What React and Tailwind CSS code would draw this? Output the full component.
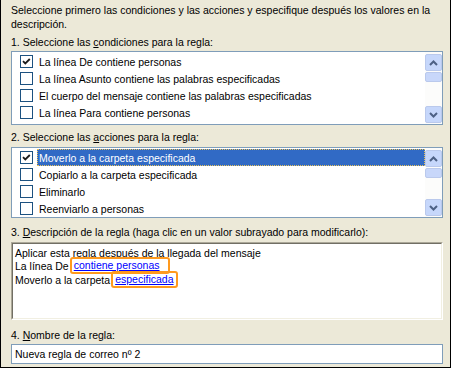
import React from "react";

const font = { fontFamily: '"Liberation Sans", Arial, sans-serif' };

const CheckBox = ({ checked }) => (
  <div className="w-[13px] h-[13px] border border-[#1C5180] bg-white flex items-center justify-center shrink-0">
    {checked && (
      <svg width="9" height="9" viewBox="0 0 9 9">
        <path d="M1 4.2 L3.3 6.5 L7.8 2" stroke="#1C1C1C" strokeWidth="1.8" fill="none" />
      </svg>
    )}
  </div>
);

const ScrollBar = () => (
  <div className="w-[17px] h-full flex flex-col bg-[#FCFCFB] pt-[2px] pb-[1px]">
    <div className="w-[17px] h-[17px] rounded-[2px] border border-[#BAC9EC] bg-[#C6D7FB] flex items-center justify-center">
      <svg width="9" height="6" viewBox="0 0 9 6">
        <path d="M1 5 L4.5 1.5 L8 5" stroke="#4D6185" strokeWidth="2" fill="none" />
      </svg>
    </div>
    <div className="w-[17px] h-[10px] mt-[1px] rounded-[2px] border border-[#BAC9EC] bg-[#C8D7FA]" />
    <div className="flex-1" />
    <div className="w-[17px] h-[17px] rounded-[2px] border border-[#BAC9EC] bg-[#C6D7FB] flex items-center justify-center">
      <svg width="9" height="6" viewBox="0 0 9 6">
        <path d="M1 1 L4.5 4.5 L8 1" stroke="#4D6185" strokeWidth="2" fill="none" />
      </svg>
    </div>
  </div>
);

const ListBox = ({ items, height }) => (
  <div className={`mx-[10px] w-[432px] ${height} border border-[#7F9DB9] bg-white flex`}>
    <div className="flex-1 flex flex-col pt-[1px]">
      {items.map((item, index) => (
        <div key={index} className="h-[17px] flex items-center pl-[8px]">
          <CheckBox checked={item.checked} />
          <div className="ml-[4px] flex-1 h-[17px] flex items-center">
            <span
              className={`h-[17px] flex items-center px-[2px] flex-1 ${
                item.selected
                  ? "bg-[#316AC5] text-white outline outline-1 outline-dotted outline-[#E8C25A] -outline-offset-1"
                  : "text-black"
              }`}
            >
              {item.label}
            </span>
          </div>
        </div>
      ))}
    </div>
    <ScrollBar />
  </div>
);

export default function App() {
  return (
    <div
      className="w-[451px] h-[368px] bg-[#ECE9D8] border-l border-r border-b border-black text-[10.5px] text-black leading-[14px]"
      style={font}
    >
      <p className="pl-[10px] pt-[3px] pr-[10px] leading-[14px]">
        Seleccione primero las condiciones y las acciones y especifique después los valores en la descripción.
      </p>
      <p className="pl-[10px] mt-[4px] mb-[2px] leading-[14px]">
        1. Seleccione las <u>c</u>ondiciones para la regla:
      </p>
      <ListBox
        height="h-[74px]"
        items={[
          { label: "La línea De contiene personas", checked: true },
          { label: "La línea Asunto contiene las palabras especificadas" },
          { label: "El cuerpo del mensaje contiene las palabras especificadas" },
          { label: "La línea Para contiene personas" },
        ]}
      />
      <p className="pl-[10px] mt-[5px] mb-[3px] leading-[14px]">
        2. Seleccione las <u>a</u>cciones para la regla:
      </p>
      <ListBox
        height="h-[71px]"
        items={[
          { label: "Moverlo a la carpeta especificada", checked: true, selected: true },
          { label: "Copiarlo a la carpeta especificada" },
          { label: "Eliminarlo" },
          { label: "Reenviarlo a personas" },
        ]}
      />
      <p className="pl-[10px] mt-[7px] mb-[3px] leading-[14px]">
        3. <u>D</u>escripción de la regla (haga clic en un valor subrayado para modificarlo):
      </p>
      <div className="mx-[10px] w-[432px] h-[78px] border border-t-[#ACA899] border-l-[#ACA899] border-r-white border-b-white">
        <div className="w-full h-full border border-t-[#716F64] border-l-[#716F64] border-r-[#F1EFE2] border-b-[#F1EFE2] bg-white pl-[2px] pt-[3px] leading-[13px]">
          <div>Aplicar esta regla después de la llegada del mensaje</div>
          <div className="flex">
            <span>La línea De</span>
            <span className="ml-[1px] px-[2px] border-2 border-[#FF9A1E] rounded-[3px] -my-[3px] h-[17px] pr-[8px] leading-[13px]">
              <span className="text-[#0000FF] underline">contiene personas</span>
            </span>
          </div>
          <div className="flex mt-[1px]">
            <span>Moverlo a la carpeta</span>
            <span className="ml-[1px] px-[2px] border-2 border-[#FF9A1E] rounded-[3px] -my-[3px] h-[17px] leading-[13px]">
              <span className="text-[#0000FF] underline">especificada</span>
            </span>
          </div>
        </div>
      </div>
      <p className="pl-[10px] mt-[8px] mb-[2px] leading-[14px]">
        4. <u>N</u>ombre de la regla:
      </p>
      <div className="mx-[10px] w-[432px] h-[20px] border border-[#7F9DB9] bg-white pl-[3px] flex items-center">
        Nueva regla de correo nº 2
      </div>
    </div>
  );
}
